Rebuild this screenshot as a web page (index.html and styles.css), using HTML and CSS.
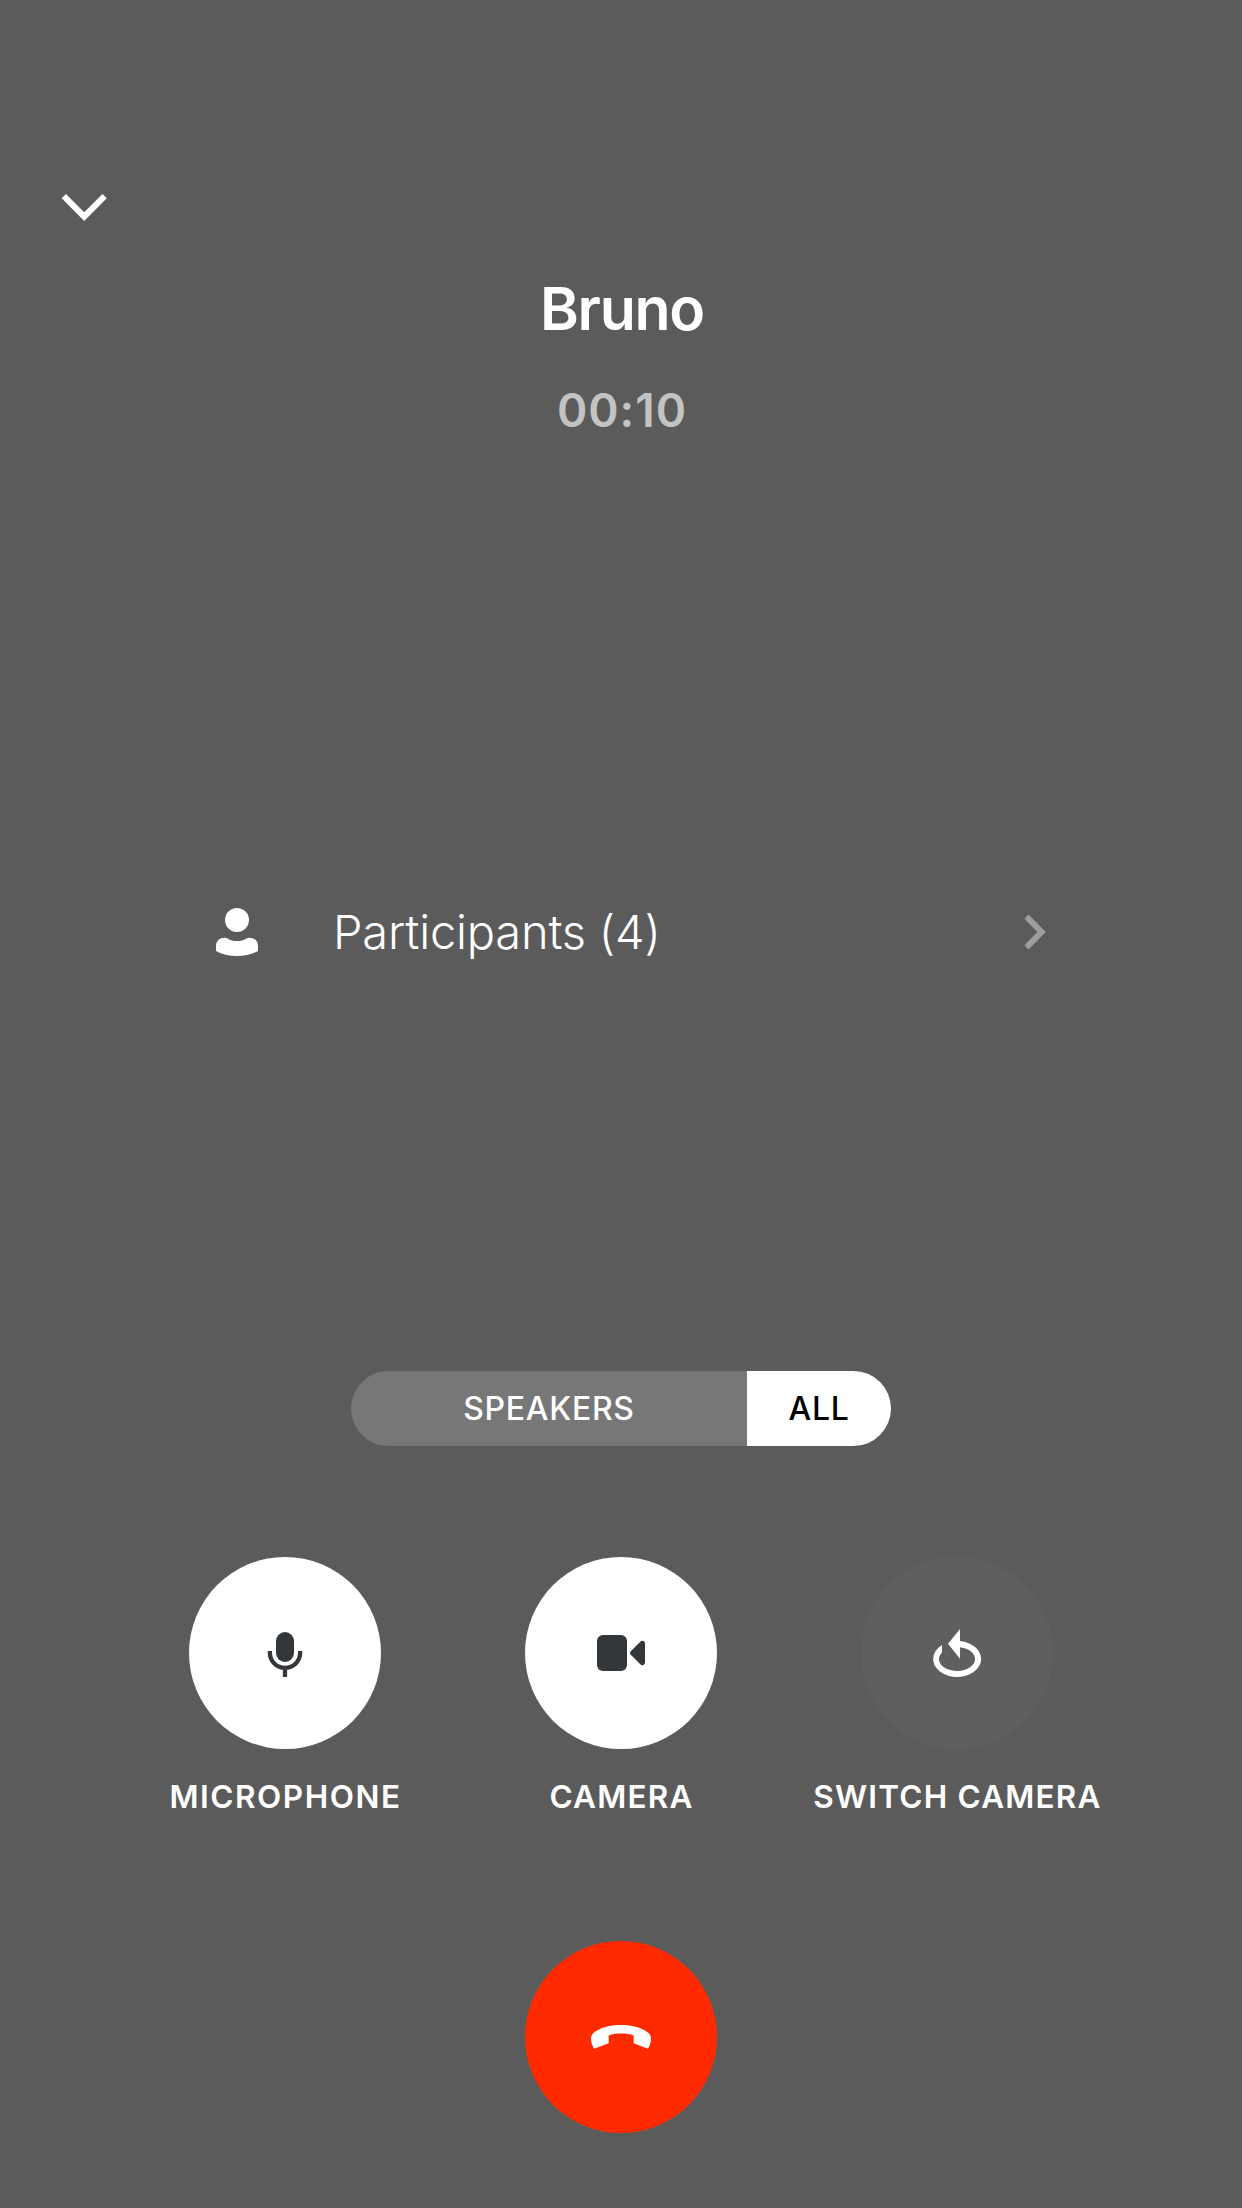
FILE: index.html
```html
<!DOCTYPE html>
<html lang="en">
<head>
<meta charset="utf-8">
<title>Call</title>
<link rel="stylesheet" href="styles.css">
</head>
<body>
<main class="call">
  <button class="minimize" aria-label="Minimize">
    <svg width="48" height="32" viewBox="0 0 48 32"><path d="M1.700 6.300 6 2 24.200 20.200 42.500 2l4.300 4.300L24.200 29z" fill="#fff"/></svg>
  </button>
  <header class="heading">
    <h1 class="name">Bruno</h1>
    <p class="timer">00:10</p>
  </header>
  <button class="participants">
    <svg width="42" height="48" viewBox="0 0 42 48" fill="#fff"><circle cx="21" cy="12" r="12"/><path d="M0 43v-5c0-5 3.500-8.300 9-8.300 3 0 4 3.300 12 3.300s9-3.300 12-3.300c5.500 0 9 3.300 9 8.300v5c-6 3.300-13 5-21 5S6 46.300 0 43z"/></svg>
    <span class="participants-label">Participants (4)</span>
    <svg width="22" height="36" viewBox="0 0 22 36"><path d="M.3 4.700 4.500.500 21.800 18 4.500 35.500.3 31.300 13.400 18z" fill="#9d9d9d"/></svg>
  </button>
  <div class="switcher">
    <button class="option speakers">SPEAKERS</button>
    <button class="option all">ALL</button>
  </div>
  <section class="controls">
    <div class="control">
      <button class="round" aria-label="Microphone">
        <svg width="48" height="48" viewBox="0 0 48 48"><rect x="15" y="3" width="18" height="30" rx="9" fill="#33373a"/><path d="M8.850 22v1.700a15.150 15.150 0 0 0 30.300 0V22M24 39v9" fill="none" stroke="#33373a" stroke-width="4.300"/></svg>
      </button>
      <span class="label mic">MICROPHONE</span>
    </div>
    <div class="control">
      <button class="round" aria-label="Camera">
        <svg width="48" height="48" viewBox="0 0 48 48" fill="#33373a"><rect y="6" width="30" height="36" rx="6"/><path d="M33.800 22.200 43 13c2.500-2.300 5-1 5 2v18c0 3-2.500 4.300-5 2l-9.200-9.200c-1.100-1.200-1.100-2.400 0-3.600z"/></svg>
      </button>
      <span class="label">CAMERA</span>
    </div>
    <div class="control">
      <button class="round dim" aria-label="Switch camera">
        <svg width="48" height="48" viewBox="0 0 48 48" fill="#fff"><path d="M27 12.100A24 18 0 1 1 9 16V23.400A18 12 0 1 0 27 18.200V29.700L15 14.800 27 0z"/></svg>
      </button>
      <span class="label">SWITCH CAMERA</span>
    </div>
  </section>
  <button class="round hangup" aria-label="Hang up">
    <svg width="60" height="24" viewBox="0 0 60 24"><path d="M3 23.700 17.700 18.300V10.400C21 9.200 25 8.600 30 8.600s9 .6 12.700 1.800v7.900L57 23.700c2-3.700 3-6.700 3-10.200 0-2.500-.7-4-2.500-5.500C51 2.500 41 0 30 0S9 2.500 2.500 8C.7 9.500 0 11 0 13.500c0 3.500 1 6.500 3 10.200z" fill="#fff"/></svg>
  </button>
</main>
</body>
</html>
```
FILE: styles.css
```css
* { box-sizing: border-box; }
body { margin: 0; background: #5b5b5b; color: #fff; font-family: Inter, "Liberation Sans", sans-serif; }
button { padding: 0; border: 0; background: none; color: inherit; font: inherit; letter-spacing: inherit; }
svg { display: block; flex: none; }
.call { display: flex; flex-direction: column; width: 1242px; height: 2208px; padding-top: 192px; align-items: center; }
.minimize { align-self: flex-start; height: 32px; margin-left: 60px; }
.heading { margin-top: 49px; text-align: center; }
.name { margin: 0; padding-left: 2px; font-size: 59px; line-height: 72px; font-weight: 600; letter-spacing: -1.3px; }
.timer { margin: 37px 0 0; padding-left: 2px; font-size: 46px; line-height: 56px; font-weight: 600; letter-spacing: 1px; color: #c3c3c3; }
.participants { display: flex; align-items: center; width: 830px; height: 60px; margin-top: 464px; margin-left: 20px; }
.participants-label { flex: 1; margin-left: 75px; text-align: left; font-size: 47px; font-weight: 300; line-height: 60px; letter-spacing: -0.2px; }
.switcher { display: flex; width: 540px; height: 75px; margin-top: 409px; border-radius: 37.5px; overflow: hidden; font-size: 32px; font-weight: 500; line-height: 75px; letter-spacing: 0.7px; }
.option { text-align: center; }
.speakers { width: 396px; background: #777; }
.all { width: 144px; background: #fff; color: #000; }
.controls { display: grid; grid-template-columns: repeat(3, 336px); margin-top: 111px; }
.control { display: flex; flex-direction: column; align-items: center; }
.round { display: flex; align-items: center; justify-content: center; width: 192px; height: 192px; border-radius: 50%; background: #fff; }
.dim { background: #5f5f5f; }
.label { margin-top: 28px; padding-left: 1px; font-size: 31.5px; line-height: 40px; font-weight: 600; letter-spacing: 1.2px; white-space: nowrap; }
.mic { letter-spacing: 1.55px; }
.hangup { margin-top: 124px; background: #ff2a00; }
```
